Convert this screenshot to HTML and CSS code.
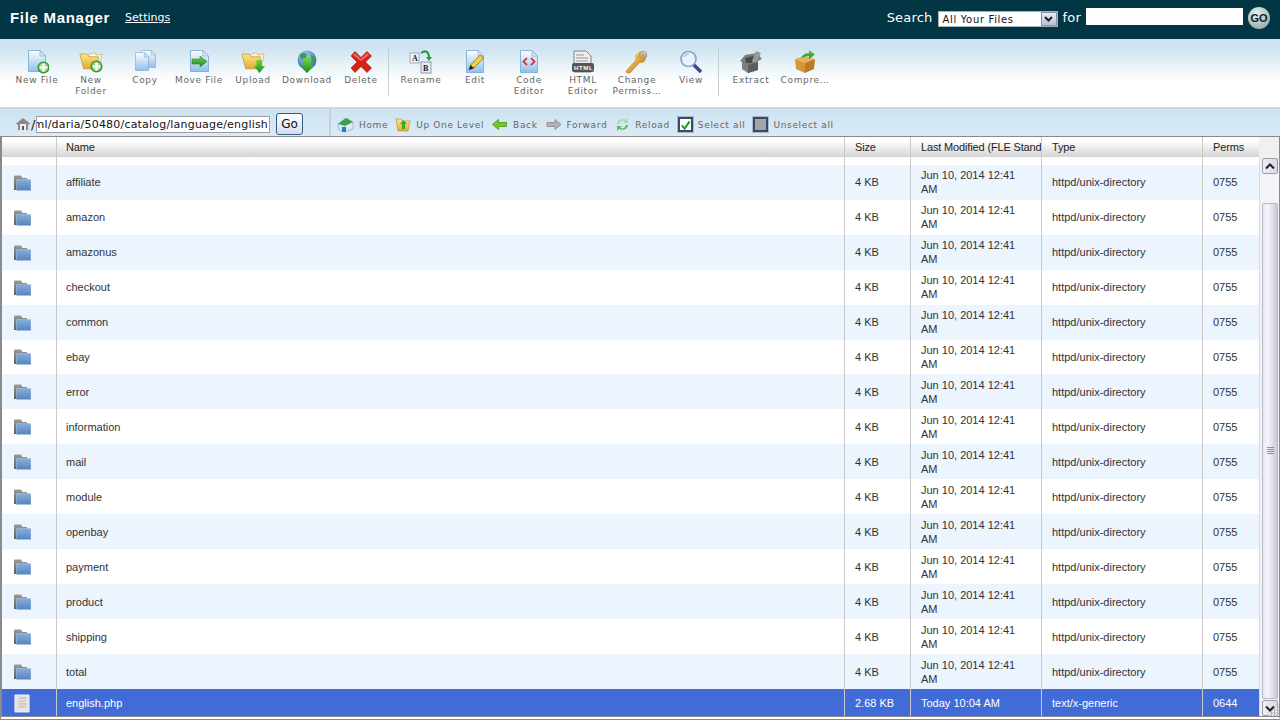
FILE: index.html
```html
<!DOCTYPE html>
<html lang="en">
<head>
<meta charset="utf-8">
<title>File Manager</title>
<link rel="stylesheet" href="styles.css">
</head>
<body>
<svg class="defs" width="0" height="0" aria-hidden="true">
  <defs>
    <linearGradient id="page" x1="0" y1="0" x2="0" y2="1"><stop offset="0" stop-color="#fdfeff"/><stop offset="1" stop-color="#8fc0ea"/></linearGradient>
    <linearGradient id="fold" x1="0" y1="0" x2="0" y2="1"><stop offset="0" stop-color="#ffe68a"/><stop offset="1" stop-color="#e6a92c"/></linearGradient>
    <linearGradient id="bluefold" x1="0" y1="0" x2="0" y2="1"><stop offset="0" stop-color="#86aede"/><stop offset="1" stop-color="#5585bd"/></linearGradient>
    <linearGradient id="greyfold" x1="0" y1="0" x2="0" y2="1"><stop offset="0" stop-color="#9a9a9a"/><stop offset="1" stop-color="#5f5f5f"/></linearGradient>
    <linearGradient id="greenb" x1="0" y1="0" x2="0" y2="1"><stop offset="0" stop-color="#6fd24a"/><stop offset="1" stop-color="#1c8a1c"/></linearGradient>
    <radialGradient id="globe" cx=".4" cy=".3" r=".8"><stop offset="0" stop-color="#a8d6f2"/><stop offset="1" stop-color="#1d5fa8"/></radialGradient>
    <linearGradient id="gkey" x1="0" y1="0" x2="1" y2="1"><stop offset="0" stop-color="#f8cf6a"/><stop offset="1" stop-color="#c97f17"/></linearGradient>
    <symbol id="i-folder" viewBox="0 0 18 16">
      <path d="M1 1.500L1.500 .5H8L9.500 3H14V5H4V15H1Z" fill="url(#greyfold)"/>
      <path d="M3.500 4.500H17.500L18 6V15.500H3.500Z" fill="url(#bluefold)" stroke="#a9bfd9" stroke-width=".6"/>
    </symbol>
    <symbol id="i-doc" viewBox="0 0 18 22" preserveAspectRatio="none">
      <path d="M.5 .5H12L17.500 6V21.500H.5Z" fill="url(#page)" stroke="#7aa5d0" stroke-width=".8"/>
      <path d="M12 .5V6H17.500Z" fill="#d6e6f6" stroke="#7aa5d0" stroke-width=".6"/>
    </symbol>
    <symbol id="i-plus" viewBox="0 0 14 14">
      <circle cx="7" cy="7" r="6.500" fill="#2f9a2f"/>
      <circle cx="7" cy="7" r="4.800" fill="#a8d59a"/>
      <path d="M5.800 2.800H8.200V5.800H11.200V8.200H8.200V11.200H5.800V8.200H2.800V5.800H5.800Z" fill="#fff"/>
    </symbol>
    <symbol id="i-openfolder" viewBox="0 0 26 22">
      <path d="M8 5L17 2.500L18.500 5L25 4L22 18H12Z" fill="#fff4cf" stroke="#bd9a54" stroke-width=".6"/>
      <path d="M1 4H9L11 7H21L20 20H5Z" fill="url(#fold)" stroke="#b78a2c" stroke-width=".7"/>
    </symbol>
  </defs>
</svg>

<header class="topbar">
  <div class="brand">
    <h1 class="title">File Manager</h1>
    <a class="settings">Settings</a>
  </div>
  <form class="search">
    <span class="search-label">Search</span>
    <span class="select"><span class="select-text">All Your Files</span><span class="select-btn"><svg width="9" height="6" viewBox="0 0 9 6"><path d="M1 1L4.500 4.500L8 1" fill="none" stroke="#222" stroke-width="2"/></svg></span></span>
    <span class="search-label">for</span>
    <span class="search-input"></span>
    <span class="go-round">GO</span>
  </form>
</header>

<nav class="toolbar">
  <div class="tool"><svg class="ti" viewBox="0 0 24 24"><use href="#i-doc" x="3" y="0" width="18" height="22"/><use href="#i-plus" x="12" y="11" width="13" height="13"/></svg><span>New File</span></div>
  <div class="tool"><svg class="ti" viewBox="0 0 24 24"><use href="#i-openfolder" x="0" y="0" width="24" height="21"/><use href="#i-plus" x="11" y="10" width="13" height="13"/></svg><span>New Folder</span></div>
  <div class="tool"><svg class="ti" viewBox="0 0 24 24"><use href="#i-doc" x="8" y="0" width="15" height="18"/><use href="#i-doc" x="2" y="2" width="14" height="19"/></svg><span>Copy</span></div>
  <div class="tool"><svg class="ti" viewBox="0 0 24 24"><use href="#i-doc" x="3" y="0" width="19" height="22"/><path d="M5 9H13V6L20 11.500L13 17V14H5Z" fill="url(#greenb)" stroke="#1e7d1e" stroke-width=".5"/></svg><span>Move File</span></div>
  <div class="tool"><svg class="ti" viewBox="0 0 24 24"><use href="#i-openfolder" x="0" y="0" width="24" height="21"/><path d="M15.500 10H21V16H24L18.500 23L13 16H15.500Z" fill="url(#greenb)"/></svg><span>Upload</span></div>
  <div class="tool"><svg class="ti" viewBox="0 0 24 24"><circle cx="12" cy="10" r="9.500" fill="url(#globe)"/><path d="M5 5C8 2 11 3 12 5C10 7 13 9 10 11C7 10 5 9 5 5ZM16 5L20 7L20 12L17 12Z" fill="#3d9b4a"/><path d="M8 8H16V15H20L12 23L4 15H8Z" fill="url(#greenb)"/></svg><span>Download</span></div>
  <div class="tool"><svg class="ti" viewBox="0 0 24 24"><path d="M2 6L6 1.500L12 7.500L18 1.500L22.500 6L16.500 12L22.500 18L18 22.500L12 16.500L6 22.500L2 18L8 12Z" fill="#d92217" stroke="#8f140e" stroke-width=".6"/><path d="M6 3L12 9L18 3L20 5L12 11L4 5Z" fill="#ee6a55"/></svg><span>Delete</span></div>
  <div class="sep"></div>
  <div class="tool"><svg class="ti" viewBox="0 0 24 24"><rect x="1" y="3" width="9" height="10" fill="#f4f4f4" stroke="#8a9ab0" stroke-width=".8"/><rect x="12" y="12" width="10" height="11" fill="#e4e9f2" stroke="#7a8aa0" stroke-width=".8"/><text x="3" y="11" class="svg-ab">A</text><text x="14" y="21" class="svg-ab">B</text><path d="M12 3C16 0 20 1 20 8" fill="none" stroke="#2d9440" stroke-width="2"/><path d="M17 7H23L20 11Z" fill="#2d9440"/></svg><span>Rename</span></div>
  <div class="tool"><svg class="ti" viewBox="0 0 24 24"><use href="#i-doc" x="3" y="0" width="18" height="23"/><path d="M6 20L7.500 15L17 5L20.500 8L11 18Z" fill="#f3d23c" stroke="#7a5d12" stroke-width=".7"/><path d="M6 20L7.500 15L11 18Z" fill="#222"/></svg><span>Edit</span></div>
  <div class="tool"><svg class="ti" viewBox="0 0 24 24"><use href="#i-doc" x="3" y="0" width="18" height="23"/><path d="M10 8L6.500 11.500L10 15M14 8L17.500 11.500L14 15" fill="none" stroke="#e0201c" stroke-width="1.700"/></svg><span>Code Editor</span></div>
  <div class="tool"><svg class="ti" viewBox="0 0 24 24"><path d="M3 1H15L20 6V22H3Z" fill="#eee" stroke="#777" stroke-width=".9"/><path d="M5 5H13M5 8H17M5 11H17" stroke="#999" stroke-width="1"/><rect x="1" y="13" width="22" height="9" rx="2" fill="#555"/><text x="3" y="20" class="svg-html">HTML</text></svg><span>HTML Editor</span></div>
  <div class="tool"><svg class="ti" viewBox="0 0 24 24"><path d="M1 21L13 8L16 11L5 23H2Z" fill="url(#gkey)" stroke="#a56c12" stroke-width=".5"/><circle cx="15.500" cy="7.500" r="5.500" fill="url(#gkey)"/><circle cx="18" cy="5" r="3.500" fill="none" stroke="#9a9a9a" stroke-width="1.200"/></svg><span>Change Permiss…</span></div>
  <div class="tool"><svg class="ti" viewBox="0 0 24 24"><path d="M14 14L22 22" stroke="#4a3f96" stroke-width="3.500"/><circle cx="9.500" cy="9" r="7.500" fill="#eaf3fd" stroke="#8aa4cf" stroke-width="1.700"/><path d="M5 7C6 5 8 4 10 4" fill="none" stroke="#a9c5e8" stroke-width="1.500"/></svg><span>View</span></div>
  <div class="sep"></div>
  <div class="tool"><svg class="ti" viewBox="0 0 24 24"><path d="M1 11L6 5L18 3L23 9L19 11V20L9 23L3 19V12Z" fill="#7e7e7e"/><path d="M6 8L15 6L13 13L7 13Z" fill="#4a4a4a"/><path d="M13 11L17 1L22 3L17 13Z" fill="#9a9a9a"/><path d="M9 15V23L19 20V12Z" fill="#5e5e5e"/></svg><span>Extract</span></div>
  <div class="tool"><svg class="ti" viewBox="0 0 24 24"><path d="M2 9L11 6L22 9L12 13Z" fill="#e8b25a"/><path d="M2 9L12 13V23L3 19Z" fill="#d49636"/><path d="M22 9L12 13V23L21 19Z" fill="#b97a22"/><path d="M8 8C10 4 13 3 16 3V0L22 4.500L16 9V6C13 6 11 7 8 8Z" fill="url(#greenb)"/></svg><span>Compre…</span></div>
</nav>

<div class="locbar">
  <div class="path">
    <svg class="home-grey" width="16" height="14" viewBox="0 0 16 14"><path d="M8 1L15 6.500L13 8V13H3V8L1 6.500Z" fill="#8a8a8a"/><path d="M5 7H11V13H5Z" fill="#eee"/><path d="M7 9H9V13H7Z" fill="#555"/></svg>
    <span class="slash">/</span>
    <span class="path-input"><span class="path-text">public_html/daria/50480/catalog/language/english</span></span>
    <span class="path-go">Go</span>
  </div>
  <div class="navs">
    <div class="nav"><svg width="17" height="16" viewBox="0 0 17 16"><path d="M1 7L9 1L16 5V12L8 15L2 13Z" fill="#dbe9f7" stroke="#7ba0c8" stroke-width=".6"/><path d="M1 7L9 1L16 5L8 9Z" fill="#3ba34a"/><path d="M5 10H9V15H5Z" fill="#2f78c4"/></svg><span>Home</span></div>
    <div class="nav"><svg width="16" height="15" viewBox="0 0 16 15"><path d="M1 2H6L7 4H15L13 14H3Z" fill="url(#fold)" stroke="#b78a2c" stroke-width=".6"/><path d="M8.500 3L12 7H10V12H7V7H5Z" fill="#3aa92f"/></svg><span>Up One Level</span></div>
    <div class="nav"><svg width="17" height="11" viewBox="0 0 16 11"><path d="M1 5.500L7 .5V3.500H15V7.500H7V10.500Z" fill="#76c81f" stroke="#3f8a12" stroke-width=".7"/></svg><span>Back</span></div>
    <div class="nav nav-shift"><svg width="16" height="11" viewBox="0 0 16 11"><path d="M15 5.500L9 .5V3.500H1V7.500H9V10.500Z" fill="#b3b3b3" stroke="#808080" stroke-width=".7"/></svg><span>Forward</span></div>
    <div class="nav nav-shift"><svg width="15" height="15" viewBox="0 0 15 15"><path d="M2 7C2 3 7 1 11 3L13 1V6H8L10 4C7 3 5 4 4 7Z" fill="#a8d8b0"/><path d="M13 8C13 12 8 14 4 12L2 14V9H7L5 11C8 12 10 11 11 8Z" fill="#54bf5a"/></svg><span>Reload</span></div>
    <div class="nav"><span class="chk"><svg width="12" height="12" viewBox="0 0 12 12"><path d="M2 6.500L5 10L10.500 2" fill="none" stroke="#16a02a" stroke-width="2.200"/></svg></span><span>Select all</span></div>
    <div class="nav"><span class="chk chk-off"></span><span>Unselect all</span></div>
  </div>
</div>

<main class="browser">
  <div class="head row">
    <div class="cell c-icon"></div><div class="cell c-name">Name</div><div class="cell c-size">Size</div><div class="cell c-date"><span class="clip">Last Modified (FLE Standard Time)</span></div><div class="cell c-type">Type</div><div class="cell c-perm">Perms</div>
    <div class="corner"></div>
  </div>
  <div class="content">
    <div class="rows">
      <div class="spacer row"><div class="cell c-icon"></div><div class="cell c-name"></div><div class="cell c-size"></div><div class="cell c-date"></div><div class="cell c-type"></div><div class="cell c-perm"></div></div>
      <div class="row dir alt"><div class="cell c-icon"><svg class="fi"><use href="#i-folder"/></svg></div><div class="cell c-name">affiliate</div><div class="cell c-size">4 KB</div><div class="cell c-date">Jun 10, 2014 12:41 AM</div><div class="cell c-type">httpd/unix-directory</div><div class="cell c-perm">0755</div></div>
      <div class="row dir"><div class="cell c-icon"><svg class="fi"><use href="#i-folder"/></svg></div><div class="cell c-name">amazon</div><div class="cell c-size">4 KB</div><div class="cell c-date">Jun 10, 2014 12:41 AM</div><div class="cell c-type">httpd/unix-directory</div><div class="cell c-perm">0755</div></div>
      <div class="row dir alt"><div class="cell c-icon"><svg class="fi"><use href="#i-folder"/></svg></div><div class="cell c-name">amazonus</div><div class="cell c-size">4 KB</div><div class="cell c-date">Jun 10, 2014 12:41 AM</div><div class="cell c-type">httpd/unix-directory</div><div class="cell c-perm">0755</div></div>
      <div class="row dir"><div class="cell c-icon"><svg class="fi"><use href="#i-folder"/></svg></div><div class="cell c-name">checkout</div><div class="cell c-size">4 KB</div><div class="cell c-date">Jun 10, 2014 12:41 AM</div><div class="cell c-type">httpd/unix-directory</div><div class="cell c-perm">0755</div></div>
      <div class="row dir alt"><div class="cell c-icon"><svg class="fi"><use href="#i-folder"/></svg></div><div class="cell c-name">common</div><div class="cell c-size">4 KB</div><div class="cell c-date">Jun 10, 2014 12:41 AM</div><div class="cell c-type">httpd/unix-directory</div><div class="cell c-perm">0755</div></div>
      <div class="row dir short"><div class="cell c-icon"><svg class="fi"><use href="#i-folder"/></svg></div><div class="cell c-name">ebay</div><div class="cell c-size">4 KB</div><div class="cell c-date">Jun 10, 2014 12:41 AM</div><div class="cell c-type">httpd/unix-directory</div><div class="cell c-perm">0755</div></div>
      <div class="row dir alt late"><div class="cell c-icon"><svg class="fi"><use href="#i-folder"/></svg></div><div class="cell c-name">error</div><div class="cell c-size">4 KB</div><div class="cell c-date">Jun 10, 2014 12:41 AM</div><div class="cell c-type">httpd/unix-directory</div><div class="cell c-perm">0755</div></div>
      <div class="row dir late"><div class="cell c-icon"><svg class="fi"><use href="#i-folder"/></svg></div><div class="cell c-name">information</div><div class="cell c-size">4 KB</div><div class="cell c-date">Jun 10, 2014 12:41 AM</div><div class="cell c-type">httpd/unix-directory</div><div class="cell c-perm">0755</div></div>
      <div class="row dir alt late"><div class="cell c-icon"><svg class="fi"><use href="#i-folder"/></svg></div><div class="cell c-name">mail</div><div class="cell c-size">4 KB</div><div class="cell c-date">Jun 10, 2014 12:41 AM</div><div class="cell c-type">httpd/unix-directory</div><div class="cell c-perm">0755</div></div>
      <div class="row dir late"><div class="cell c-icon"><svg class="fi"><use href="#i-folder"/></svg></div><div class="cell c-name">module</div><div class="cell c-size">4 KB</div><div class="cell c-date">Jun 10, 2014 12:41 AM</div><div class="cell c-type">httpd/unix-directory</div><div class="cell c-perm">0755</div></div>
      <div class="row dir alt late"><div class="cell c-icon"><svg class="fi"><use href="#i-folder"/></svg></div><div class="cell c-name">openbay</div><div class="cell c-size">4 KB</div><div class="cell c-date">Jun 10, 2014 12:41 AM</div><div class="cell c-type">httpd/unix-directory</div><div class="cell c-perm">0755</div></div>
      <div class="row dir late"><div class="cell c-icon"><svg class="fi"><use href="#i-folder"/></svg></div><div class="cell c-name">payment</div><div class="cell c-size">4 KB</div><div class="cell c-date">Jun 10, 2014 12:41 AM</div><div class="cell c-type">httpd/unix-directory</div><div class="cell c-perm">0755</div></div>
      <div class="row dir alt late"><div class="cell c-icon"><svg class="fi"><use href="#i-folder"/></svg></div><div class="cell c-name">product</div><div class="cell c-size">4 KB</div><div class="cell c-date">Jun 10, 2014 12:41 AM</div><div class="cell c-type">httpd/unix-directory</div><div class="cell c-perm">0755</div></div>
      <div class="row dir late"><div class="cell c-icon"><svg class="fi"><use href="#i-folder"/></svg></div><div class="cell c-name">shipping</div><div class="cell c-size">4 KB</div><div class="cell c-date">Jun 10, 2014 12:41 AM</div><div class="cell c-type">httpd/unix-directory</div><div class="cell c-perm">0755</div></div>
      <div class="row dir alt late"><div class="cell c-icon"><svg class="fi"><use href="#i-folder"/></svg></div><div class="cell c-name">total</div><div class="cell c-size">4 KB</div><div class="cell c-date">Jun 10, 2014 12:41 AM</div><div class="cell c-type">httpd/unix-directory</div><div class="cell c-perm">0755</div></div>
      <div class="row file sel"><div class="cell c-icon"><svg class="fdoc" width="16" height="19" viewBox="0 0 17 19"><path d="M1 .5H16V18.500H1Z" fill="#e4e4e4" stroke="#f6f6f6"/><path d="M5 4H13M5 7H13M5 10H13M5 13H13" stroke="#c4c4c4" stroke-width="1.500"/></svg></div><div class="cell c-name">english.php</div><div class="cell c-size">2.68 KB</div><div class="cell c-date">Today 10:04 AM</div><div class="cell c-type">text/x-generic</div><div class="cell c-perm">0644</div></div>
    </div>
    <div class="scrollbar">
      <div class="sb-btn"><svg width="10" height="7" viewBox="0 0 10 7"><path d="M1 5.500L5 1.500L9 5.500" fill="none" stroke="#222" stroke-width="2"/></svg></div>
      <div class="sb-track"></div>
      <div class="sb-thumb"><div class="grip"></div></div>
      <div class="sb-btn"><svg width="10" height="7" viewBox="0 0 10 7"><path d="M1 1.500L5 5.500L9 1.500" fill="none" stroke="#222" stroke-width="2"/></svg></div>
      <div class="resizer"></div>
    </div>
  </div>
</main>
</body>
</html>
```
FILE: styles.css
```css
* { box-sizing: border-box; }
html, body { margin: 0; padding: 0; height: 720px; overflow: hidden; background: #fff; }
body { font-family: "DejaVu Sans", Verdana, sans-serif; display: flex; flex-direction: column; }
.defs { position: absolute; }

.topbar { height: 39px; background: #023645; display: flex; align-items: center; justify-content: space-between; padding: 0 10px; color: #fff; flex: none; }
.brand { display: flex; align-items: center; gap: 15px; margin-top: -5px; }
.title { margin: 0; font-family: "Liberation Sans", Arial, sans-serif; font-size: 15px; font-weight: bold; letter-spacing: .7px; }
.settings { font-size: 11px; text-decoration: underline; }
.search { display: flex; align-items: center; margin-top: -2px; }
.search-label { font-size: 13px; letter-spacing: .2px; margin-bottom: 3px; }
.select { width: 120px; height: 16px; margin: 1px 5px 0; background: #fff; border: 1px solid #a9b0bb; display: flex; align-items: center; justify-content: space-between; color: #111; font-size: 10px; letter-spacing: .65px; padding-left: 4px; }
.select-btn { width: 16px; height: 14px; background: linear-gradient(#e9edf5, #b6bfd4); border: 1px solid #8b93a8; display: flex; align-items: center; justify-content: center; }
.search-input { width: 157px; height: 17px; background: #fff; margin: 0 0 4px 5px; }
.go-round { width: 22px; height: 22px; border-radius: 50%; margin: 0 0 1px 5px; background: radial-gradient(circle at 40% 30%, #e8f0f0, #7f999e); color: #122; font-size: 11px; font-weight: bold; display: flex; align-items: center; justify-content: center; font-family: "Liberation Sans", sans-serif; }

.toolbar { height: 70px; flex: none; display: flex; padding: 11px 0 0 10px; background: linear-gradient(#cbe2f1 0, #d0e5f2 15%, #fff 62%, #fff 100%); border-bottom: 2px solid #cdd8de; }
.tool { width: 54px; flex: none; display: flex; flex-direction: column; align-items: center; font-size: 9px; line-height: 11px; letter-spacing: .65px; color: #666; text-align: center; }
.tool span { margin-top: 1px; }
.ti { width: 24px; height: 24px; flex: none; }
.sep { width: 1px; height: 48px; background: #c4cdd2; margin-right: 5px; flex: none; margin-top: -2px; }
.svg-ab { font: bold 8px "Liberation Serif", serif; fill: #222; }
.svg-html { font: bold 6px "Liberation Sans", sans-serif; fill: #fff; }

.locbar { height: 27px; flex: none; display: flex; background: linear-gradient(#cce3f1, #dceaf5); align-items: stretch; }
.path { width: 331px; display: flex; align-items: center; padding: 3px 0 0 15px; border-right: 2px solid #c4d0d8; }
.home-grey { flex: none; }
.slash { font-size: 13px; color: #222; width: 5px; }
.path-input { width: 234px; height: 17px; background: #fff; border: 1px solid #9a9ea6; font-size: 11px; letter-spacing: .2px; color: #111; overflow: hidden; display: flex; justify-content: flex-end; align-items: center; white-space: nowrap; padding-right: 1px; }
.path-text { flex: none; }
.path-go { width: 27px; height: 22px; margin-left: 6px; border: 1px solid #2d5f85; border-radius: 3px; background: linear-gradient(#fff, #d6dcee); color: #111; font-size: 12px; display: flex; align-items: center; justify-content: center; }
.navs { display: flex; align-items: center; padding: 4px 0 0 6px; gap: 7px; }
.nav { display: flex; align-items: center; gap: 5px; font-size: 9px; letter-spacing: .65px; color: #666; }
.nav-shift { margin-left: 1px; }
.chk { width: 15px; height: 15px; border: 2px solid #3b4a63; background: #fff; outline: 1px solid #a9b9cc; display: flex; align-items: center; justify-content: center; margin-left: 1px; }
.chk-off { background: #a5a5a5; }

.browser { flex: none; height: 584px; border-top: 1px solid #8a8a8a; border-left: 2px solid #8a8a8a; border-right: 1px solid #8a8a8a; border-bottom: 4px double #8a8a8a; display: flex; flex-direction: column; font-family: "Liberation Sans", Arial, sans-serif; font-size: 11px; color: #333; background: #fff; }
.row { display: grid; grid-template-columns: 55px 788px 66px 131px 161px 56px; }
.cell { border-right: 1px solid #c9c9c9; display: flex; align-items: center; padding: 0 9px 1px 10px; min-width: 0; }
.late .cell { padding-top: 1px; padding-bottom: 0; }
.short .cell { padding-bottom: 0; }
.sel .cell { padding-bottom: 0; }
.c-name { padding-left: 9px; }
.c-perm { border-right: 0; }
.head { height: 20px; flex: none; background: #f0f0f0; grid-template-columns: 55px 788px 66px 131px 161px 56px 1fr; letter-spacing: -.15px; }
.head .cell { background: linear-gradient(#fff 20%, #d4d4d4); color: #222; padding-bottom: 0; }
.clip { white-space: nowrap; overflow: hidden; width: 120px; flex: none; }
.c-date { padding-right: 16px; line-height: 14px; }
.head .c-date { padding-right: 0; }
.corner { background: #f0f0f0; }
.content { flex: 1; display: flex; min-height: 0; }
.rows { width: 1257px; flex: none; overflow: hidden; }
.spacer { height: 8px; }
.dir { height: 35px; }
.short { height: 34px; }
.file { height: 28px; }
.alt { background: #ecf4fd; }
.sel { background: #416cd8; color: #fff; }
.sel .c-date { white-space: nowrap; }
.row .c-icon { justify-content: flex-start; padding: 0 0 0 11px; }
.fi { width: 18px; height: 16px; }
.row.file .c-icon { padding-left: 12px; }
.scrollbar { flex: 1; display: flex; flex-direction: column; padding: 1px 1px 0 2px; background: #f4f4f8; border-left: 1px solid #d8d8d8; position: relative; }
.sb-btn { height: 16px; flex: none; background: linear-gradient(90deg, #f0f0f6, #d6d8e4); border: 1px solid #9a9ca8; border-radius: 2px; display: flex; align-items: center; justify-content: center; }
.sb-track { height: 29px; flex: none; background: #f4f4f8; }
.sb-thumb { flex: 1; margin-bottom: 1px; background: linear-gradient(90deg, #e6e6ee, #f6f6fa 35%, #c8c9d8); border: 1px solid #b8b9c8; border-radius: 2px; display: flex; align-items: center; justify-content: center; }
.grip { width: 7px; height: 7px; margin-bottom: 1px; background: repeating-linear-gradient(#8e90a0 0 1px, transparent 1px 2px); }
.resizer { position: absolute; right: 0; bottom: 0; width: 12px; height: 12px; background: repeating-conic-gradient(#b4b4b4 0 25%, #f0f0f0 0 50%) 0 0 / 3px 3px; clip-path: polygon(100% 0, 100% 100%, 0 100%); }
```
